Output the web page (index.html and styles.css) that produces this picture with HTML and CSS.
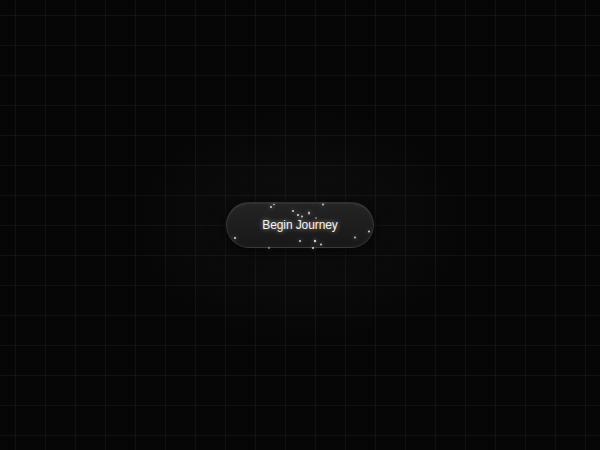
FILE: index.html
```html
<!DOCTYPE html>
<html lang="en">
<head>
  <meta charset="UTF-8">
  <meta name="viewport" content="width=device-width, initial-scale=1.0">
  <title>Begin Journey</title>
  <link rel="stylesheet" href="styles.css">
</head>
<body>
  <main class="stage">
    <button class="journey-btn" type="button">
      <!-- floating star dust inside the pill -->
      <svg class="dust" width="148" height="46" viewBox="0 0 148 46" aria-hidden="true">
        <circle cx="44" cy="4" r="1"/>
        <circle cx="47" cy="1.5" r="0.8"/>
        <circle cx="96" cy="1.5" r="0.9"/>
        <circle cx="66" cy="8" r="1"/>
        <circle cx="71" cy="12" r="1.1"/>
        <circle cx="75" cy="13.5" r="0.9"/>
        <ellipse cx="82" cy="10" rx="0.9" ry="1.5"/>
        <circle cx="89" cy="15" r="0.7"/>
        <circle cx="8" cy="35" r="1.1"/>
        <circle cx="73" cy="38" r="1"/>
        <circle cx="88" cy="38" r="1.2"/>
        <circle cx="94" cy="41.5" r="1"/>
        <circle cx="128" cy="34.5" r="0.9"/>
        <circle cx="142" cy="28.5" r="1"/>
        <circle cx="42" cy="45" r="0.8"/>
        <circle cx="86" cy="45" r="1"/>
      </svg>
      <span class="label">Begin Journey</span>
    </button>
  </main>
</body>
</html>
```

FILE: styles.css
```css
html,
body {
  margin: 0;
  padding: 0;
  height: 100%;
}

body {
  font-family: 'Inter', 'Liberation Sans', sans-serif;
  background-color: #060606;
  background-image:
    radial-gradient(ellipse 170px 120px at center, rgba(255, 255, 255, 0.04), transparent),
    linear-gradient(to right, rgba(255, 255, 255, 0.045) 1px, transparent 1px),
    linear-gradient(to bottom, rgba(255, 255, 255, 0.045) 1px, transparent 1px);
  background-size: 100% 100%, 30px 30px, 30px 30px;
  background-position: center, 15px 15px, 15px 15px;
  overflow: hidden;
}

.stage {
  height: 100%;
  display: flex;
  align-items: center;
  justify-content: center;
}

.journey-btn {
  position: relative;
  width: 148px;
  height: 46px;
  padding: 0;
  border: 1px solid rgba(255, 255, 255, 0.1);
  border-radius: 999px;
  background: linear-gradient(180deg, #242424 0%, #1d1d1d 55%, #181818 100%);
  box-shadow:
    inset 0 1px 0 rgba(255, 255, 255, 0.06),
    inset 0 0 8px rgba(255, 255, 255, 0.03),
    0 4px 18px rgba(0, 0, 0, 0.7);
  color: #f4f4f4;
  cursor: pointer;
  display: flex;
  align-items: center;
  justify-content: center;
  box-sizing: border-box;
}

.dust {
  position: absolute;
  inset: 0;
  fill: rgba(255, 255, 255, 0.8);
  filter: drop-shadow(0 0 2px rgba(255, 255, 255, 0.7));
  pointer-events: none;
}

.label {
  position: relative;
  font-size: 12px;
  font-weight: 500;
  letter-spacing: -0.1px;
  text-shadow: 0 0 5px rgba(255, 255, 255, 0.6);
}
```
